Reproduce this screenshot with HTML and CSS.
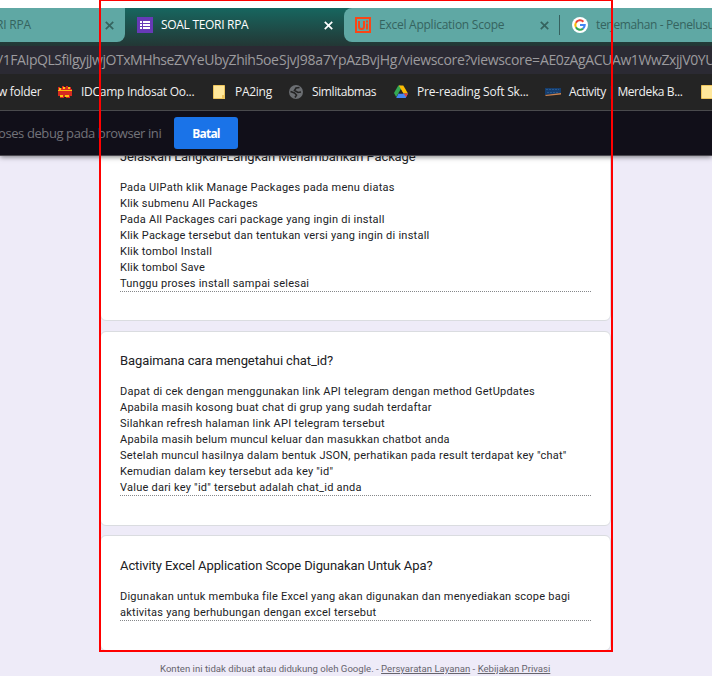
FILE: index.html
```html
<!DOCTYPE html>
<html lang="id">
<head>
<meta charset="utf-8">
<title>SOAL TEORI RPA</title>
<link rel="stylesheet" href="styles.css">
</head>
<body>
<div class="window">
  <header class="browser">
    <nav class="tabs">
      <div class="tab tab-first"><span class="label t1">RI RPA</span>
        <svg class="close" viewBox="0 0 8 8"><path d="M.7.7l6.6 6.6M7.3.7L.7 7.3"/></svg></div>
      <div class="tab active">
        <svg class="fav" viewBox="0 0 16 16"><path fill="#673ab7" d="M0 0h16v16H0z"/><path fill="#fff" d="M3 4h2v2H3zM6 4h7v2H6zM3 7h2v2H3zM6 7h7v2H6zM3 10h2v2H3zM6 10h7v2H6z"/></svg>
        <span class="label t2">SOAL TEORI RPA</span>
        <svg class="close" viewBox="0 0 8 8"><path d="M.7.7l6.6 6.6M7.3.7L.7 7.3"/></svg></div>
      <div class="tab tab-excel">
        <svg class="fav" viewBox="0 0 16 16"><path fill="none" stroke="#fa4616" stroke-width="2" d="M1 1h14v14H1z"/><path fill="none" stroke="#fa4616" stroke-width="2" d="M4 4v5.500a2.500 2.500 0 0 0 5 0V4M12 6.500v6M12 3.500v2"/></svg>
        <span class="label t3">Excel Application Scope</span>
        <svg class="close" viewBox="0 0 8 8"><path d="M.7.7l6.6 6.6M7.3.7L.7 7.3"/></svg></div>
      <div class="tab tab-google">
        <svg class="fav" viewBox="0 0 16 16"><circle cx="8" cy="8" r="8" fill="#fff"/><g fill="none" stroke-width="2.100"><path stroke="#ea4335" d="M3.900 5.700A4.700 4.700 0 0 1 11.400 4.700"/><path stroke="#fbbc05" d="M3.900 5.700a4.700 4.700 0 0 0 0 4.600"/><path stroke="#34a853" d="M3.900 10.300a4.700 4.700 0 0 0 7.100 1.300"/><path stroke="#4285f4" d="M8 8h4.700a4.700 4.700 0 0 1-1.700 3.600"/></g></svg>
        <span class="label t4">terjemahan - Penelusu</span></div>
    </nav>
    <div class="address"><span class="u1">/1FAIpQLSfilgyjJwjOTxMHhseZVYeUbyZhih5oe</span><span class="u2">SjvJ98a7YpAzBvjHg</span><span class="u3">/viewscore?viewscore=</span><span class="u4">AE0zAgACUAw1WwZxjjV0YU</span></div>
    <nav class="bookmarks">
      <div class="bm b0"><span>w folder</span></div>
      <div class="bm b1"><svg viewBox="0 0 16 16"><path fill="#d62b20" d="M1 3h2v1h2V2h2v1h2V2h2v1h3v2h1v7h-2v2H9v-1H7v1H3v-2H1z"/><path fill="#ffc20e" d="M2 4h2v2H2zM6 3h2v2H6zM11 3h2v2h-2zM1 6h14v1H1zM3 11h3v2H3zM8 11h4v2H8z"/></svg><span>IDCamp Indosat Oo...</span></div>
      <div class="bm b2"><svg viewBox="0 0 16 16"><path fill="#ffe79a" stroke="#edc45c" d="M2.500 1.500h11v13h-11z"/><path fill="#edc45c" d="M11 11h3v4h-3z"/></svg><span>PA2ing</span></div>
      <div class="bm b3"><svg viewBox="0 0 16 16"><circle cx="8" cy="8" r="7" fill="#6b6e72"/><path fill="none" stroke="#242424" stroke-width="1.600" d="M11.500 3.500L8 4 6.500 6.500 10 8.500l3-.5M2.500 7.500l4 1.500 2 2-1.500 2.500"/></svg><span>Simlitabmas</span></div>
      <div class="bm b4"><svg viewBox="0 0 16 16"><path fill="#34a853" d="M5.300 1.500L1 9l2.200 4 5.400-9.200L7.300 1.500z"/><path fill="#fbbc04" d="M5.800 1.500h4.500L15 9.500h-4.600z"/><path fill="#4285f4" d="M5.500 9.500H15L12.700 14H3.200z"/><path fill="#ea4335" d="M10.700 9.500H15L13 13z"/><path fill="#242424" d="M8 6L6 9.500h4z"/></svg><span>Pre-reading Soft Sk...</span></div>
      <div class="bm b5"><svg viewBox="0 0 16 16"><path fill="#163d6d" d="M0 4h16v5L0 11z"/><path stroke="#28598e" stroke-dasharray="2 1" d="M1 5.500h13M2 8.500h11"/><path fill="#cb8452" d="M0 11l16-2v1.500L1 12z"/></svg><span>Activity | Merdeka B...</span></div>
      <div class="bm b6"><svg viewBox="0 0 16 16"><path fill="#ffe79a" stroke="#edc45c" d="M1.500 1.500h13v13h-13z"/></svg></div>
    </nav>
    <div class="debug"><span>oses debug pada browser ini</span><button>Batal</button></div>
  </header>
  <main class="form">
    <section class="card first">
      <h2>Jelaskan Langkah-Langkah Menambahkan Package</h2>
      <div class="answer"><p>Pada UIPath klik Manage Packages pada menu diatas</p><p>Klik submenu All Packages</p><p>Pada All Packages cari package yang ingin di install</p><p>Klik Package tersebut dan tentukan versi yang ingin di install</p><p>Klik tombol Install</p><p>Klik tombol Save</p><p>Tunggu proses install sampai selesai</p></div>
    </section>
    <section class="card second">
      <h2>Bagaimana cara mengetahui chat_id?</h2>
      <div class="answer"><p>Dapat di cek dengan menggunakan link API telegram dengan method GetUpdates</p><p>Apabila masih kosong buat chat di grup yang sudah terdaftar</p><p>Silahkan refresh halaman link API telegram tersebut</p><p>Apabila masih belum muncul keluar dan masukkan chatbot anda</p><p>Setelah muncul hasilnya dalam bentuk JSON, perhatikan pada result terdapat key "chat"</p><p>Kemudian dalam key tersebut ada key "id"</p><p>Value dari key "id" tersebut adalah chat_id anda</p></div>
    </section>
    <section class="card third">
      <h2>Activity Excel Application Scope Digunakan Untuk Apa?</h2>
      <div class="answer"><p>Digunakan untuk membuka file Excel yang akan digunakan dan menyediakan scope bagi</p><p>aktivitas yang berhubungan dengan excel tersebut</p></div>
    </section>
  </main>
  <footer>Konten ini tidak dibuat atau didukung oleh Google. - <u>Persyaratan Layanan</u> - <u>Kebijakan Privasi</u></footer>
  <div class="frame"></div>
</div>
</body>
</html>
```
FILE: styles.css
```css
* { box-sizing: border-box; }
body { margin: 0; background: #eeebf8; font-family: Roboto, sans-serif; overflow: hidden; }
.window { position: relative; width: 712px; height: 676px; overflow: hidden; }
.browser { position: relative; z-index: 1; height: 156px; padding-top: 8px; background: #fff; border-bottom: 1px solid #4b4950; box-shadow: 0 1px 5px rgba(0,0,0,.5); font-family: "Open Sans", sans-serif; white-space: nowrap; }
.tabs { height: 38px; display: flex; background: linear-gradient(#17665f, #233735); }
.tab { height: 34px; display: flex; align-items: center; background: #5fa8a4; color: #35645f; font-size: 12px; }
.tab-first { width: 125px; border-radius: 0 0 8px 0; }
.active { width: 219px; padding-left: 12px; background: none; color: #fff; }
.tab-excel { width: 216px; padding-left: 11px; border-radius: 8px 0 0 8px; position: relative; }
.tab-excel::after { content: ""; position: absolute; right: 0; top: 7px; width: 1px; height: 20px; background: #36615f; }
.tab-google { width: 152px; padding-left: 12px; overflow: hidden; }
.fav { width: 16px; height: 16px; flex: none; margin-right: 8px; }
.close { width: 9px; height: 9px; margin-left: auto; margin-right: 11px; fill: none; stroke: currentColor; stroke-width: 1.5; flex: none; }
.label { flex: none; margin-top: -1px; }
.t1 { margin-left: -4px; letter-spacing: -.2px; }
.t2 { letter-spacing: -.3px; }
.t3 { letter-spacing: -.25px; }
.t4 { letter-spacing: -.38px; }
.address { height: 28px; line-height: 28px; display: flex; background: #2b2a33; color: #9c9b9e; font-size: 14px; letter-spacing: -.3px; overflow: hidden; }
.address span { flex: none; }
.u1 { width: 281px; margin-left: -2px; letter-spacing: -.45px; }
.u2 { width: 119px; }
.u3 { width: 142px; letter-spacing: -.32px; }
.u4 { letter-spacing: -.4px; }
.bookmarks { height: 36px; padding-bottom: 1px; background: #242424; display: flex; align-items: center; color: #f0f0f0; font-size: 12px; overflow: hidden; }
.bm { flex: none; display: flex; align-items: center; gap: 8px; letter-spacing: -.28px; }
.bm svg { width: 16px; height: 16px; flex: none; }
.bm span { margin-top: -1px; }
.b0 { width: 57px; }
.b0 span { margin-left: -2px; }
.b1 { width: 154px; }
.b2 { width: 77px; }
.b3 { width: 105px; letter-spacing: -.4px; }
.b4 { width: 152px; letter-spacing: -.2px; }
.b5 { width: 155px; letter-spacing: -.4px; }
.debug { height: 45px; border-top: 1px solid #4a4a4d; background: #110f19; display: flex; align-items: center; color: #73737a; font-size: 13px; }
.debug span { width: 176px; margin-left: -2px; letter-spacing: -.4px; }
button { width: 64px; height: 32px; padding: 0; border: 0; border-radius: 3px; background: #1a73e8; color: #fff; font: 700 12px "Open Sans", sans-serif; letter-spacing: -.8px; }
.form { width: 511px; margin-left: 100px; display: flex; flex-direction: column; }
.card { background: #fff; border: 1px solid #dadce0; border-radius: 6px; padding: 19px 19px 0; }
.first { height: 175px; margin-top: -10px; padding-top: 0; }
.second { height: 195px; margin-top: 10px; }
.third { height: 116px; margin-top: 9px; padding-top: 20px; }
h2 { margin: 0; font-size: 13px; line-height: 20px; font-weight: 400; letter-spacing: -.1px; color: #202124; white-space: nowrap; }
.answer { margin-top: 12px; border-bottom: 1px dotted #85878a; color: #202124; font-size: 11px; line-height: 16px; letter-spacing: .24px; white-space: nowrap; height: 113px; }
.first .answer { padding-top: 1px; }
.second .answer { margin-top: 13px; height: 112px; }
.third .answer { margin-top: 13px; height: 32px; }
p { margin: 0; }
footer { margin: 12px 0 0 160px; font-size: 9.6px; line-height: 12px; color: #66646d; white-space: nowrap; }
.frame { position: absolute; z-index: 2; left: 99px; top: -1px; width: 514px; height: 653px; border: 2px solid #f00; pointer-events: none; }
```
